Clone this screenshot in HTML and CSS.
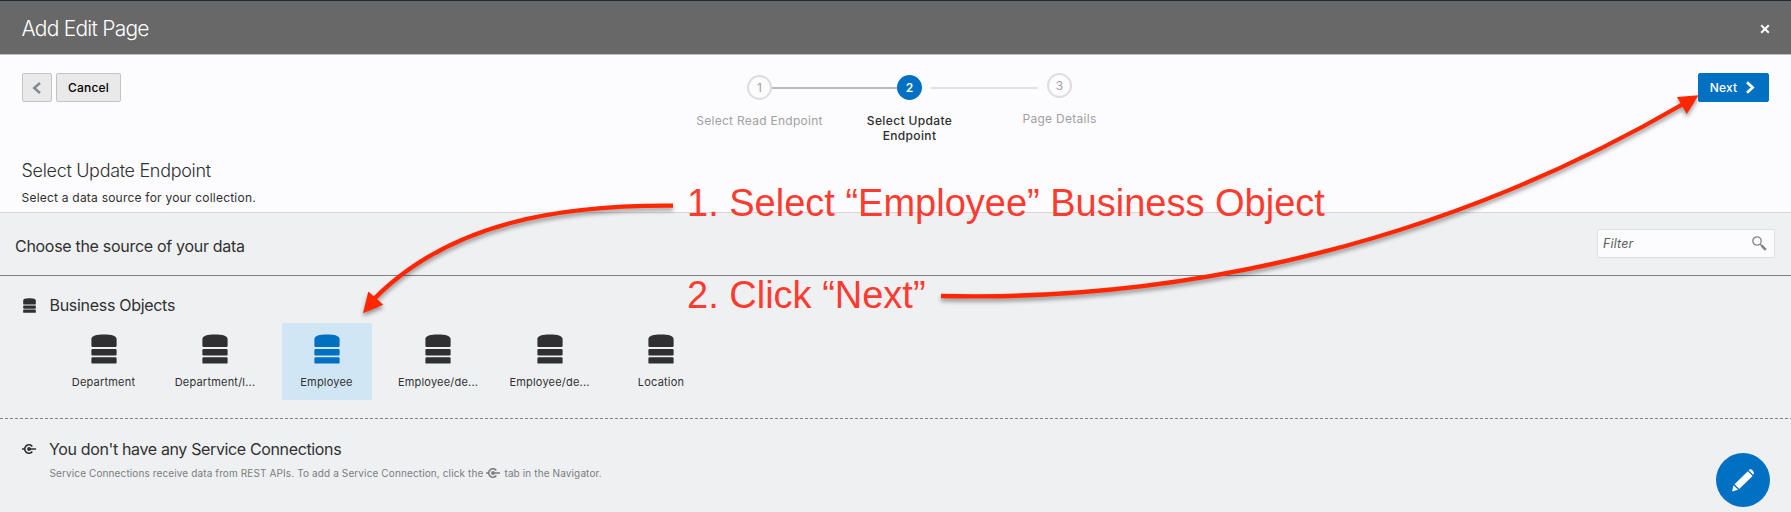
FILE: index.html
```html
<!DOCTYPE html>
<html lang="en">
<head>
<meta charset="utf-8">
<title>Add Edit Page</title>
<link rel="stylesheet" href="styles.css">
</head>
<body>
<svg class="defs" aria-hidden="true">
  <symbol id="db" viewBox="0 0 26 30">
    <path d="M.4 5.2C.4 2 5.500.6 13 .6s12.600 1.400 12.600 4.600v6.600q0 1.200-1.200 1.200H1.600Q.4 13 .4 11.800z"/>
    <rect x=".4" y="15" width="25.200" height="6.400" rx="1.200"/>
    <rect x=".4" y="23.200" width="25.200" height="6.400" rx="1.200"/>
  </symbol>
  <symbol id="plug" viewBox="0 0 14 12">
    <path d="M0 6h2.600M7 6h7" fill="none" stroke="currentColor" stroke-width="1.400"/>
    <path d="M10.300 3.500A4.200 4.200 0 1 0 10.300 8.500" fill="none" stroke="currentColor" stroke-width="1.600"/>
    <circle cx="7" cy="6" r="1.900"/>
  </symbol>
</svg>

<header class="titlebar">
  <h1>Add Edit Page</h1>
  <svg class="close" viewBox="0 0 10 10"><path d="M1.200 1.200l7.600 7.600M8.800 1.200L1.200 8.800"/></svg>
</header>

<section class="wizard">
  <div class="nav">
    <div class="nav-left">
      <button class="btn back"><svg viewBox="0 0 10 12"><path d="M8 1L2.200 6 8 11"/></svg></button>
      <button class="btn cancel">Cancel</button>
    </div>
    <ol class="stepper">
      <li class="step">
        <div class="track"><i class="line none"></i><b class="dot">1</b><i class="line done"></i></div>
        <span>Select Read Endpoint</span>
      </li>
      <li class="step current">
        <div class="track"><i class="line done"></i><b class="dot">2</b><i class="line after"></i></div>
        <span>Select Update<br>Endpoint</span>
      </li>
      <li class="step last">
        <div class="track"><i class="line before"></i><b class="dot">3</b><i class="line none"></i></div>
        <span>Page Details</span>
      </li>
    </ol>
    <button class="btn next">Next<svg viewBox="0 0 10 13"><path d="M2 1.300l5.600 5.200L2 11.700"/></svg></button>
  </div>
  <h2>Select Update Endpoint</h2>
  <p class="hint">Select a data source for your collection.</p>
</section>

<section class="source">
  <h3>Choose the source of your data</h3>
  <div class="filter"><span>Filter</span>
    <svg viewBox="0 0 15 15"><circle cx="5" cy="5" r="4.200" stroke-width="1.300"/><path d="M8 8l2 2" stroke-width="1.400"/><path d="M9.600 9.600l4.200 4.200" stroke-width="2.600"/></svg>
  </div>
</section>

<section class="objects">
  <div class="group"><svg class="db-small"><use href="#db"/></svg><h3>Business Objects</h3></div>
  <div class="tiles">
    <div class="tile"><svg><use href="#db"/></svg><span>Department</span></div>
    <div class="tile"><svg><use href="#db"/></svg><span>Department/l...</span></div>
    <div class="tile selected"><svg><use href="#db"/></svg><span>Employee</span></div>
    <div class="tile"><svg><use href="#db"/></svg><span>Employee/de...</span></div>
    <div class="tile"><svg><use href="#db"/></svg><span>Employee/de...</span></div>
    <div class="tile"><svg><use href="#db"/></svg><span>Location</span></div>
  </div>
</section>

<section class="services">
  <div class="group"><svg class="plug"><use href="#plug"/></svg><h3>You don't have any Service Connections</h3></div>
  <p>Service Connections receive data from REST APIs. To add a Service Connection, click the<svg class="plug"><use href="#plug"/></svg>tab in the Navigator.</p>
</section>

<button class="fab"><svg viewBox="0 0 54 54"><path d="M16 38.500l1.500-6.300 4.600 4.600zM18.600 31.200L31.800 18.300l4.800 4.800L23.200 36.100zM32.700 17.300l1-1q1.200-.6 2.800 1t1.400 3.400l-.8 1z"/></svg></button>

<div class="note note-select">1. Select “Employee” Business Object</div>
<div class="note note-next">2. Click “Next”</div>
<svg class="arrows" viewBox="0 0 1791 512">
  <path class="stroke" d="M673 205.700C560 205 450 222 374 299"/>
  <path class="head" d="M363 313.300l5.300-21.800 15 13.300z"/>
  <path class="stroke" d="M941 296C1190 302 1450 240 1684 103.500"/>
  <path class="head" d="M1698.500 95.200l-21.500 1.700 9.800 17z"/>
</svg>
</body>
</html>
```
FILE: styles.css
```css
* { box-sizing: border-box; }
body {
  margin: 0;
  height: 512px;
  position: relative;
  overflow: hidden;
  background: #eff0f2;
  color: #303032;
  font-family: Inter, "Liberation Sans", sans-serif;
}
h1, h2, h3, p, ol { margin: 0; padding: 0; font-weight: 400; }
button { font-family: inherit; padding: 0; }
svg { display: block; fill: currentColor; }
.defs { display: none; }

.titlebar {
  height: 55px;
  padding: 0 21px;
  display: flex;
  align-items: center;
  justify-content: space-between;
  background: #686868;
  border-top: 1px solid #1d2b38;
  border-bottom: 1px solid #c0c0c0;
  color: #fff;
}
h1 { font-size: 21px; font-weight: 350; letter-spacing: -.75px; line-height: 26px; padding: 2px 0 0 .5px; }
.close { width: 10px; height: 10px; margin-top: 2px; fill: none; stroke: #fff; stroke-width: 2; }

.wizard { height: 158px; padding: 18px 22px 0; background: #fcfcfe; border-bottom: 1px solid #d6d6d9; }
.nav { display: grid; grid-template-columns: 662.5px 450px 1fr; height: 86px; }
.nav-left { display: flex; gap: 4px; }
.btn {
  height: 29px;
  border: 1px solid #c4c4c6;
  border-radius: 2px;
  background: #e9e9ea;
  font-size: 12px;
  font-weight: 500;
  display: flex;
  align-items: center;
  justify-content: center;
}
.back { width: 30px; color: #84888b; }
.back svg { width: 10px; height: 12px; fill: none; stroke: currentColor; stroke-width: 2.4; }
.cancel { width: 65px; font-weight: 450; letter-spacing: .2px; color: #000; }
.next { width: 71px; justify-self: end; background: #0070c2; border-color: #0070c2; color: #fff; gap: 8px; letter-spacing: .15px; padding-right: 2px; }
.next svg { width: 10px; height: 13px; fill: none; stroke: #fff; stroke-width: 2.7; }

.stepper { list-style: none; display: flex; padding-top: 2px; }
.step { width: 150px; text-align: center; font-size: 12px; letter-spacing: .28px; line-height: 15px; color: #a0a0a2; }
.last { margin-top: -2px; }
.track { display: grid; grid-template-columns: 1fr 25px 1fr; align-items: center; height: 25px; margin-bottom: 13px; }
.step span { display: block; }
.dot {
  width: 25px;
  height: 25px;
  border: 2px solid #dddddf;
  border-radius: 50%;
  font-weight: 400;
  line-height: 21px;
  letter-spacing: 0;
}
.line { height: 2px; background: #e2e2e4; }
.none { background: none; }
.done { background: #b9b9bb; }
.after { margin-left: 9px; }
.before { margin-right: 9px; margin-top: 4px; }
.current { color: #2e2e30; font-weight: 500; letter-spacing: .36px; }
.current .dot { background: #0070c2; border-color: #0070c2; color: #fff; font-weight: 600; }

h2 { font-size: 18px; font-weight: 300; letter-spacing: -.32px; line-height: 24px; margin-left: -.5px; }
.hint { font-size: 12px; letter-spacing: .22px; line-height: 16px; margin: 7px 0 0 -.5px; }

.source {
  height: 63px;
  padding: 2px 16px 0 15px;
  border-bottom: 1px solid #808286;
  display: flex;
  align-items: center;
  justify-content: space-between;
}
h3 { font-size: 16px; letter-spacing: -.3px; line-height: 20px; }
.source h3 { padding-top: 2px; }
.filter {
  width: 178px;
  height: 29px;
  margin-top: -3px;
  padding: 0 7px 0 5px;
  border: 1px solid #dedfe2;
  border-radius: 2px;
  background: #fcfcfe;
  color: #5c5e62;
  font-size: 12.5px;
  font-style: italic;
  letter-spacing: .15px;
  display: flex;
  align-items: center;
  justify-content: space-between;
}
.filter svg { width: 15px; height: 15px; margin-top: -1px; fill: none; stroke: #808487; }

.objects { height: 143px; padding-top: 19px; background: repeating-linear-gradient(90deg, #808286 0 3px, transparent 3px 5px) left bottom / 100% 1px no-repeat; }
.group { display: flex; align-items: center; height: 20px; }
.db-small { width: 13px; height: 15px; margin: 0 14px 0 22.500px; }
.tiles { display: flex; gap: 21.500px; padding: 8px 0 0 58.500px; }
.tile { width: 90px; height: 77px; display: flex; flex-direction: column; align-items: center; padding-top: 11px; font-size: 11px; letter-spacing: .2px; line-height: 14px; }
.tile svg { width: 26px; height: 30px; margin-bottom: 11px; }
.selected { background: #d0e6f5; }
.selected svg { color: #0070c2; }

.services { padding-top: 20px; }
.plug { width: 14px; height: 12px; }
.group .plug { margin: 0 13px 0 22px; }
.services h3 { letter-spacing: -.36px; }
.services p { display: flex; align-items: center; margin: 7px 0 0 49.5px; font-size: 10px; line-height: 14px; letter-spacing: .12px; color: #7b7d80; }
.services p .plug { margin: 0 4px 0 3px; }

.fab { position: absolute; left: 1716px; top: 453px; width: 54px; height: 54px; padding: 0; border: 0; border-radius: 50%; background: #0070c2; color: #fff; }
.note { position: absolute; left: 687px; font: 38px/44px "Liberation Sans", Arial, sans-serif; color: #ff3b30; white-space: nowrap; }
.note-select { top: 181px; }
.note-next { top: 273px; }
.arrows { position: absolute; left: 0; top: 0; width: 1791px; height: 512px; pointer-events: none; filter: drop-shadow(0 3px 2px rgba(0, 0, 0, .4)); }
.stroke { fill: none; stroke: #ff2600; stroke-width: 4.3; }
.head { fill: #ff2600; }
```
